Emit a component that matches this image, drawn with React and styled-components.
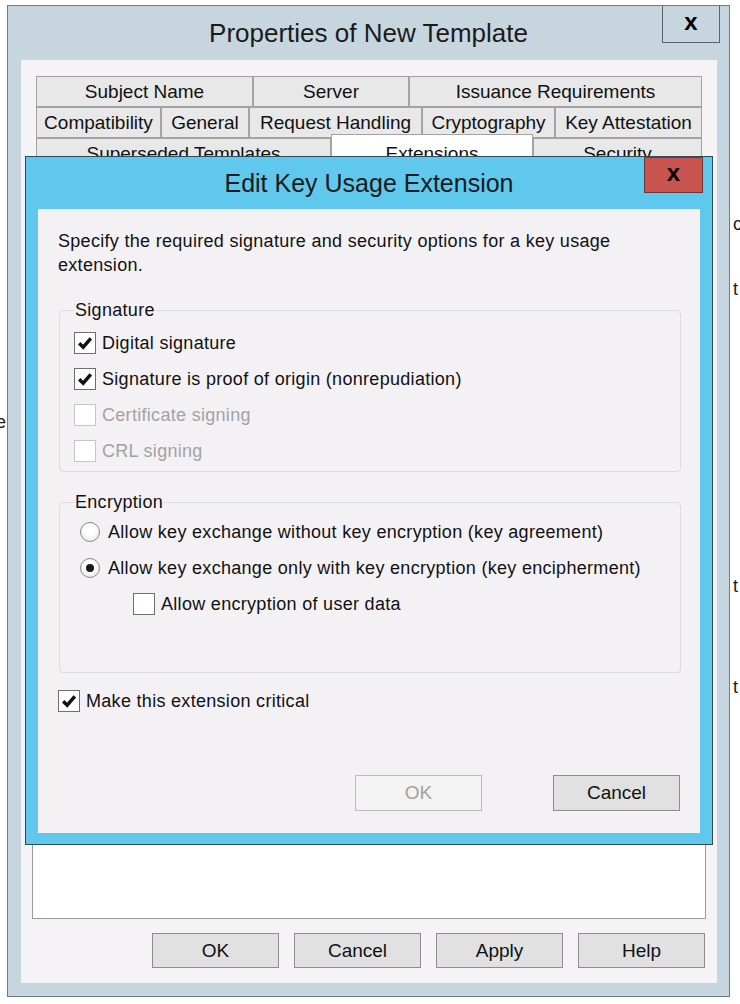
import React from 'react';
import styled, { createGlobalStyle } from 'styled-components';

const GlobalStyle = createGlobalStyle`
  html, body {
    margin: 0;
    padding: 0;
    background: #ffffff;
    font-family: "Liberation Sans", Arial, sans-serif;
  }
`;

const Page = styled.div`
  position: relative;
  width: 740px;
  height: 1004px;
  padding: 5px 0 0 7px;
  box-sizing: border-box;
  overflow: hidden;
`;

// text of windows lying behind, peeking out at the edges
const Stray = styled.span`
  position: absolute;
  font-size: 18px;
  line-height: 20px;
  color: #1c1c1c;
`;

const Window = styled.div`
  width: 723px;
  height: 992px;
  box-sizing: border-box;
  border: 1px solid #6d7c84;
  background: #c7d6de;
  display: flex;
  flex-direction: column;
`;

const TitleBar = styled.div`
  height: ${p => p.$h}px;
  flex: none;
  display: grid;
  grid-template-columns: 1fr auto 1fr;
  align-items: center;
  padding: 0 9px;
`;

const Title = styled.div`
  grid-column: 2;
  font-size: ${p => p.$size}px;
  color: #1b1b1b;
  white-space: nowrap;
`;

const CloseButton = styled.div`
  grid-column: 3;
  justify-self: end;
  align-self: start;
  width: ${p => p.$w}px;
  height: ${p => p.$h}px;
  box-sizing: border-box;
  border: 1px solid ${p => (p.$red ? '#6a3a38' : '#56646b')};
  border-top: ${p => (p.$red ? '1px solid #6a3a38' : '0')};
  background: ${p => (p.$red ? '#c9534f' : '#c7d6de')};
  display: flex;
  align-items: center;
  justify-content: center;
  font-size: 24px;
  font-weight: bold;
  line-height: 1;
  color: #000;
  padding-bottom: 4px;
`;

const WindowBody = styled.div`
  flex: 1;
  margin: 0 12px 13px 13px;
  background: #f5f3f5;
  padding: 16px 11px 15px 11px;
  display: flex;
  flex-direction: column;
  min-height: 0;
`;

const Tabs = styled.div`
  margin: 0 4px;
  display: flex;
  flex-direction: column;
`;

const TabRow = styled.div`
  display: flex;
  align-items: flex-end;
`;

const Tab = styled.div`
  width: ${p => p.$w}px;
  height: ${p => (p.$active ? 35 : 31)}px;
  margin-top: ${p => (p.$active ? -4 : 0)}px;
  box-sizing: border-box;
  border: 1px solid #a3a3a3;
  background: ${p => (p.$active ? '#ffffff' : '#e8e8e8')};
  display: flex;
  align-items: center;
  justify-content: center;
  padding-top: ${p => (p.$active ? 4 : 0)}px;
  font-size: 19px;
  color: #111;
  white-space: nowrap;
`;

const Panel = styled.div`
  flex: 1;
  background: #ffffff;
  border: 1px solid #9a9a9a;
`;

const WindowButtons = styled.div`
  display: flex;
  justify-content: flex-end;
  gap: 15px;
  margin-top: 14px;
  padding-right: 1px;
`;

const Button = styled.div`
  width: 127px;
  height: ${p => p.$h || 35}px;
  box-sizing: border-box;
  border: 1px solid ${p => (p.$disabled ? '#bcbcbc' : '#8d8d8d')};
  background: ${p => (p.$disabled ? '#f3f3f3' : '#e1e1e1')};
  color: ${p => (p.$disabled ? '#a0a0a0' : '#111')};
  display: flex;
  align-items: center;
  justify-content: center;
  font-size: 19px;
  letter-spacing: 0;
`;

const Dialog = styled.div`
  position: absolute;
  left: 25px;
  top: 156px;
  width: 688px;
  height: 689px;
  box-sizing: border-box;
  border: 1px solid #2f4b59;
  background: #5fc8ec;
  display: flex;
  flex-direction: column;
`;

const DialogBody = styled.div`
  flex: 1;
  margin: 0 12px 11px 12px;
  background: #f4f1f5;
  display: flex;
  flex-direction: column;
  padding: 20px 20px 22px 20px;
  font-size: 18px;
  letter-spacing: 0.3px;
  color: #111;
`;

const Description = styled.p`
  margin: 0;
  line-height: 24px;
`;

const Group = styled.fieldset`
  margin: ${p => p.$top}px -1px 0 1px;
  border: 1px solid #d7dde1;
  border-radius: 4px;
  padding: ${p => p.$pt}px 0 ${p => p.$pb}px 14px;
  min-width: 0;
`;

const Legend = styled.legend`
  padding: 0 1px;
  font-size: 18px;
  line-height: 20px;
  color: #111;
`;

const Row = styled.div`
  height: 36px;
  display: flex;
  align-items: center;
  gap: ${p => p.$gap || 6}px;
  padding-left: ${p => p.$indent || 0}px;
  color: ${p => (p.$disabled ? '#a2a2a2' : '#111')};
  white-space: nowrap;
`;

const Box = styled.div`
  width: 22px;
  height: 22px;
  box-sizing: border-box;
  border: 1px solid ${p => (p.$disabled ? '#c6c6c6' : '#6f6f6f')};
  background: #ffffff;
  display: flex;
  align-items: center;
  justify-content: center;
`;

const Radio = styled.div`
  width: 20px;
  height: 20px;
  margin-left: 6px;
  box-sizing: border-box;
  border-radius: 50%;
  border: 1px solid #8a8a8a;
  background: radial-gradient(circle at 50% 40%, #ffffff 30%, #e2e2e2 100%);
  display: flex;
  align-items: center;
  justify-content: center;
`;

const Dot = styled.div`
  width: 8px;
  height: 8px;
  border-radius: 50%;
  background: #1a1a1a;
`;

const DialogButtons = styled.div`
  margin-top: auto;
  display: flex;
  justify-content: flex-end;
  gap: 71px;
`;

const Check = ({ checked, disabled }) => (
  <Box $disabled={disabled}>
    {checked && (
      <svg width="16" height="16" viewBox="0 0 16 16">
        <path d="M2.2 8.2 L6.2 12.2 L13.8 3.4" fill="none" stroke="#111" strokeWidth="3.4" strokeLinejoin="miter" />
      </svg>
    )}
  </Box>
);

const CheckRow = ({ label, checked, disabled, indent }) => (
  <Row $disabled={disabled} $indent={indent}>
    <Check checked={checked} disabled={disabled} />
    <span>{label}</span>
  </Row>
);

const RadioRow = ({ label, selected }) => (
  <Row $gap={8}>
    <Radio>{selected && <Dot />}</Radio>
    <span>{label}</span>
  </Row>
);

const tabRows = [
  [
    { label: 'Subject Name', w: 217 },
    { label: 'Server', w: 156 },
    { label: 'Issuance Requirements', w: 293 },
  ],
  [
    { label: 'Compatibility', w: 125 },
    { label: 'General', w: 88 },
    { label: 'Request Handling', w: 173 },
    { label: 'Cryptography', w: 133 },
    { label: 'Key Attestation', w: 147 },
  ],
  [
    { label: 'Superseded Templates', w: 295 },
    { label: 'Extensions', w: 202, active: true },
    { label: 'Security', w: 169 },
  ],
];

const App = () => {
  return (
    <Page>
      <GlobalStyle />
      <Stray style={{ left: 733, top: 214 }}>c</Stray>
      <Stray style={{ left: 733, top: 279 }}>t</Stray>
      <Stray style={{ left: -4, top: 412 }}>e</Stray>
      <Stray style={{ left: 733, top: 576 }}>t</Stray>
      <Stray style={{ left: 733, top: 677 }}>t</Stray>
      <Stray style={{ left: -4, top: 840 }}>.</Stray>

      <Window>
        <TitleBar $h={54}>
          <Title $size={26}>Properties of New Template</Title>
          <CloseButton $w={58} $h={37}>x</CloseButton>
        </TitleBar>
        <WindowBody>
          <Tabs>
            {tabRows.map((row, i) => (
              <TabRow key={i}>
                {row.map(tab => (
                  <Tab key={tab.label} $w={tab.w} $active={tab.active}>
                    {tab.label}
                  </Tab>
                ))}
              </TabRow>
            ))}
          </Tabs>
          <Panel />
          <WindowButtons>
            <Button>OK</Button>
            <Button>Cancel</Button>
            <Button>Apply</Button>
            <Button>Help</Button>
          </WindowButtons>
        </WindowBody>
      </Window>

      <Dialog>
        <TitleBar $h={52}>
          <Title $size={25}>Edit Key Usage Extension</Title>
          <CloseButton $w={59} $h={36} $red>x</CloseButton>
        </TitleBar>
        <DialogBody>
          <Description>
            Specify the required signature and security options for a key usage
            <br />
            extension.
          </Description>

          <Group $top={23} $pt={5} $pb={2}>
            <Legend>Signature</Legend>
            <CheckRow label="Digital signature" checked />
            <CheckRow label="Signature is proof of origin (nonrepudiation)" checked />
            <CheckRow label="Certificate signing" disabled />
            <CheckRow label="CRL signing" disabled />
          </Group>

          <Group $top={20} $pt={2} $pb={50}>
            <Legend>Encryption</Legend>
            <RadioRow label="Allow key exchange without key encryption (key agreement)" />
            <RadioRow label="Allow key exchange only with key encryption (key encipherment)" selected />
            <CheckRow label="Allow encryption of user data" indent={59} />
          </Group>

          <div style={{ marginTop: 10 }}>
            <CheckRow label="Make this extension critical" checked />
          </div>

          <DialogButtons>
            <Button $h={36} $disabled>OK</Button>
            <Button $h={36}>Cancel</Button>
          </DialogButtons>
        </DialogBody>
      </Dialog>
    </Page>
  );
};

export default App;
